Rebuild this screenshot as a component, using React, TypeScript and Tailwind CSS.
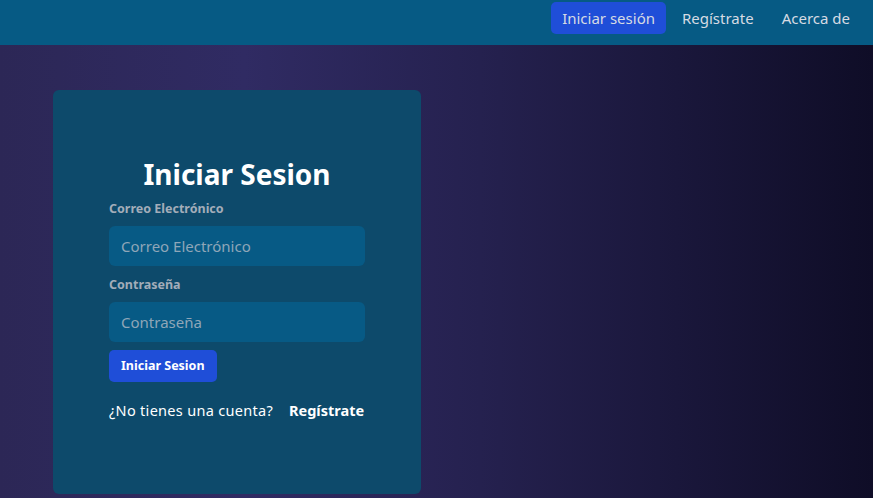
export default function App() {
  return (
    <div
      className="w-[873px] h-[498px] overflow-hidden flex flex-col bg-[linear-gradient(to_right,#2c2756_0%,#302b63_28%,#25214f_55%,#0f0d27_100%)]"
      style={{ fontFamily: '"Noto Sans", "Open Sans", sans-serif' }}
    >
      <nav className="h-[45px] shrink-0 bg-[#065a84] flex items-start justify-end pr-[23px] pt-[2px] gap-[1px]">
        <a className="h-[32px] px-[11px] flex items-center rounded-[5px] bg-[#1f4ed8] text-[#d6dbe3] text-[15px]">
          Iniciar sesión
        </a>
        <a className="h-[32px] px-[15px] flex items-center text-[#d6dbe3] text-[15px]">Regístrate</a>
        <a className="h-[32px] pl-[12px] flex items-center text-[#d6dbe3] text-[15px]">Acerca de</a>
      </nav>

      <div className="pl-[53px] pt-[45px]">
        <div className="w-[368px] h-[404px] rounded-[6px] bg-[#0d4a6b] flex flex-col items-center pt-[66px]">
          <div className="w-[256px] flex flex-col">
            <h1 className="text-center text-white font-bold text-[28px] leading-[36px]">Iniciar Sesion</h1>
            <label className="mt-[9px] text-[12.5px] font-bold text-[#a3adb9] leading-[16px]">Correo Electrónico</label>
            <input
              placeholder="Correo Electrónico"
              className="mt-[9px] h-[40px] rounded-[6px] bg-[#075a85] px-[12px] text-[15px] text-white placeholder:text-[#8fa6b8] outline-none"
            />
            <label className="mt-[11px] text-[12.5px] font-bold text-[#a3adb9] leading-[16px]">Contraseña</label>
            <input
              type="password"
              placeholder="Contraseña"
              className="mt-[9px] h-[40px] rounded-[6px] bg-[#075a85] px-[12px] text-[15px] text-white placeholder:text-[#8fa6b8] outline-none"
            />
            <button className="mt-[8px] self-start h-[32px] px-[12px] rounded-[5px] bg-[#1f4ed8] text-white text-[12.5px] font-bold">
              Iniciar Sesion
            </button>
            <p className="mt-[18px] whitespace-nowrap text-white text-[14.5px] tracking-[0.3px] leading-[20px]">
              ¿No tienes una cuenta?<span className="ml-[16px] font-bold tracking-normal">Regístrate</span>
            </p>
          </div>
        </div>
      </div>
    </div>
  );
}
